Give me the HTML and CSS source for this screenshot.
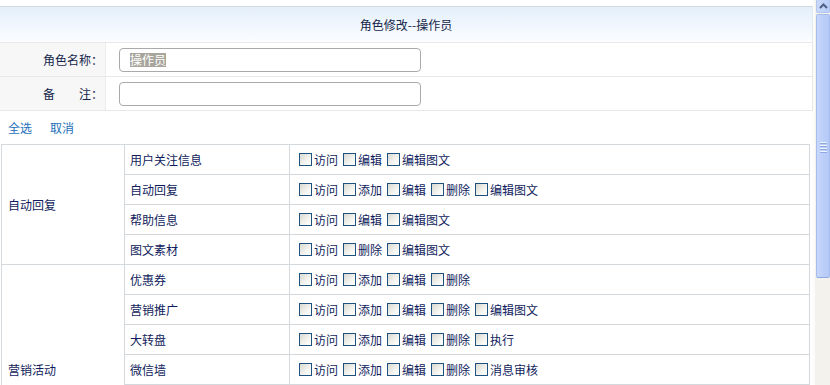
FILE: index.html
```html
<!DOCTYPE html>
<html lang="zh">
<head>
<meta charset="utf-8">
<title>角色修改</title>
<link rel="stylesheet" href="styles.css">
</head>
<body>
<div class="page">
  <div class="main">
    <div class="topgap"></div>
    <div class="header">角色修改--操作员</div>
    <div class="form-row">
      <div class="form-label">角色名称：</div>
      <div class="form-field"><div class="input"><span class="sel">操作员</span></div></div>
    </div>
    <div class="form-row">
      <div class="form-label">备　　注：</div>
      <div class="form-field"><div class="input"></div></div>
    </div>
    <div class="links">
      <a class="link">全选</a>
      <a class="link">取消</a>
    </div>
    <table class="perm-table">
      <colgroup><col class="c1"><col class="c2"><col></colgroup>
      <tr>
        <td class="group" rowspan="4">自动回复</td>
        <td class="name">用户关注信息</td>
        <td><div class="perms"><label class="perm"><input type="checkbox">访问</label><label class="perm"><input type="checkbox">编辑</label><label class="perm"><input type="checkbox">编辑图文</label></div></td>
      </tr>
      <tr>
        <td class="name">自动回复</td>
        <td><div class="perms"><label class="perm"><input type="checkbox">访问</label><label class="perm"><input type="checkbox">添加</label><label class="perm"><input type="checkbox">编辑</label><label class="perm"><input type="checkbox">删除</label><label class="perm"><input type="checkbox">编辑图文</label></div></td>
      </tr>
      <tr>
        <td class="name">帮助信息</td>
        <td><div class="perms"><label class="perm"><input type="checkbox">访问</label><label class="perm"><input type="checkbox">编辑</label><label class="perm"><input type="checkbox">编辑图文</label></div></td>
      </tr>
      <tr>
        <td class="name">图文素材</td>
        <td><div class="perms"><label class="perm"><input type="checkbox">访问</label><label class="perm"><input type="checkbox">删除</label><label class="perm"><input type="checkbox">编辑图文</label></div></td>
      </tr>
      <tr>
        <td class="group" rowspan="7">营销活动</td>
        <td class="name">优惠券</td>
        <td><div class="perms"><label class="perm"><input type="checkbox">访问</label><label class="perm"><input type="checkbox">添加</label><label class="perm"><input type="checkbox">编辑</label><label class="perm"><input type="checkbox">删除</label></div></td>
      </tr>
      <tr>
        <td class="name">营销推广</td>
        <td><div class="perms"><label class="perm"><input type="checkbox">访问</label><label class="perm"><input type="checkbox">添加</label><label class="perm"><input type="checkbox">编辑</label><label class="perm"><input type="checkbox">删除</label><label class="perm"><input type="checkbox">编辑图文</label></div></td>
      </tr>
      <tr>
        <td class="name">大转盘</td>
        <td><div class="perms"><label class="perm"><input type="checkbox">访问</label><label class="perm"><input type="checkbox">添加</label><label class="perm"><input type="checkbox">编辑</label><label class="perm"><input type="checkbox">删除</label><label class="perm"><input type="checkbox">执行</label></div></td>
      </tr>
      <tr>
        <td class="name">微信墙</td>
        <td><div class="perms"><label class="perm"><input type="checkbox">访问</label><label class="perm"><input type="checkbox">添加</label><label class="perm"><input type="checkbox">编辑</label><label class="perm"><input type="checkbox">删除</label><label class="perm"><input type="checkbox">消息审核</label></div></td>
      </tr>
      <tr>
        <td class="name">刮刮卡</td>
        <td><div class="perms"><label class="perm"><input type="checkbox">访问</label><label class="perm"><input type="checkbox">添加</label><label class="perm"><input type="checkbox">编辑</label><label class="perm"><input type="checkbox">删除</label></div></td>
      </tr>
      <tr>
        <td class="name">砸金蛋</td>
        <td><div class="perms"><label class="perm"><input type="checkbox">访问</label><label class="perm"><input type="checkbox">添加</label><label class="perm"><input type="checkbox">编辑</label><label class="perm"><input type="checkbox">删除</label></div></td>
      </tr>
      <tr>
        <td class="name">一战到底</td>
        <td><div class="perms"><label class="perm"><input type="checkbox">访问</label><label class="perm"><input type="checkbox">添加</label><label class="perm"><input type="checkbox">编辑</label><label class="perm"><input type="checkbox">删除</label></div></td>
      </tr>
    </table>
  </div>
  <div class="scrollbar">
    <div class="sb-btn">
      <svg width="9" height="6" viewBox="0 0 9 6"><path d="M1 5 L4.5 1.5 L8 5" fill="none" stroke="#4d6185" stroke-width="2"/></svg>
    </div>
    <div class="sb-thumb"><div class="grip"><i></i><i></i><i></i><i></i></div></div>
    <div class="sb-track"></div>
  </div>
</div>
</body>
</html>
```

FILE: styles.css
```css
html, body {
  margin: 0;
  padding: 0;
  background: #fff;
  overflow: hidden;
}

body {
  font-family: "Noto Sans CJK SC", "Noto Sans", sans-serif;
  font-size: 12px;
  color: #101c5c;
}

.page {
  display: flex;
  width: 830px;
  height: 385px;
  overflow: hidden;
}

.main {
  width: 813px;
  flex: none;
  overflow: hidden;
}

.topgap {
  height: 6px;
}

.header {
  height: 35px;
  line-height: 35px;
  text-align: center;
  border-top: 1px solid #d2dae2;
  border-right: 1px solid #e4eaf0;
  background: linear-gradient(#e4effb, #fbfdff);
  color: #15264a;
  font-size: 12px;
}

.form-row {
  display: grid;
  grid-template-columns: 106px 1fr;
  height: 33px;
  border-top: 1px solid #e8e8e8;
  border-right: 1px solid #e8e8e8;
}

.form-row + .form-row {
  border-bottom: 1px solid #e8e8e8;
}

.form-label {
  background: #f7f7f7;
  border-right: 1px solid #ececec;
  display: flex;
  align-items: center;
  justify-content: flex-end;
  padding-right: 2px;
  color: #15264a;
}

.form-field {
  display: flex;
  align-items: center;
  padding-left: 13px;
}

.input {
  box-sizing: border-box;
  width: 302px;
  height: 24px;
  border: 1px solid #aaaaaa;
  border-radius: 4px;
  background: #fff;
  display: flex;
  align-items: center;
  padding-left: 10px;
}

.sel {
  background: #a8a69c;
  color: #fff;
  line-height: 14px;
}

.links {
  height: 33px;
  display: flex;
  align-items: center;
  gap: 18px;
  padding-left: 8px;
}

.link {
  color: #1b6fba;
  text-decoration: none;
  cursor: pointer;
}

.perm-table {
  margin-left: 1px;
  width: 809px;
  border-collapse: collapse;
  table-layout: fixed;
}

.perm-table .c1 { width: 123px; }
.perm-table .c2 { width: 165px; }

.perm-table td {
  border: 1px solid #d3d9dc;
  height: 29px;
  padding: 0 5px;
  vertical-align: middle;
  white-space: nowrap;
  color: #101c5c;
}

.perm-table td.group {
  padding-left: 6px;
}

.perms {
  display: flex;
  align-items: center;
  gap: 5px;
  padding-left: 4px;
}

.perm {
  display: flex;
  align-items: center;
}

.perm input {
  appearance: none;
  -webkit-appearance: none;
  box-sizing: border-box;
  width: 13px;
  height: 13px;
  margin: 0 2px 0 0;
  border: 1px solid #1d5180;
  background: linear-gradient(135deg, #d9d8d1, #f4f4f0 60%, #ffffff);
}

.scrollbar {
  width: 17px;
  flex: none;
  display: flex;
  flex-direction: column;
  background: #f4f2ec;
  border-left: 2px solid #fbfbf9;
  box-sizing: border-box;
}

.sb-btn {
  height: 12px;
  margin: 0 0 1px 1px;
  background: linear-gradient(90deg, #c9d8fb, #b9cdf6);
  border: 1px solid #b3c6ee;
  border-top: none;
  border-radius: 0 0 2px 2px;
  display: flex;
  align-items: center;
  justify-content: center;
}

.sb-thumb {
  height: 264px;
  margin-left: 1px;
  border: 1px solid #a6bdee;
  border-bottom-color: #8ea9df;
  border-radius: 2px;
  background: linear-gradient(90deg, #c8d7fc, #bccff9 50%, #b4c9f6);
  display: flex;
  justify-content: center;
  padding-top: 127px;
  box-sizing: border-box;
}

.grip {
  display: flex;
  flex-direction: column;
  gap: 1px;
}

.grip i {
  display: block;
  width: 7px;
  height: 1px;
  background: #eef3ff;
  border-bottom: 1px solid #8fa9e2;
}

.sb-track {
  flex: 1;
}
```
